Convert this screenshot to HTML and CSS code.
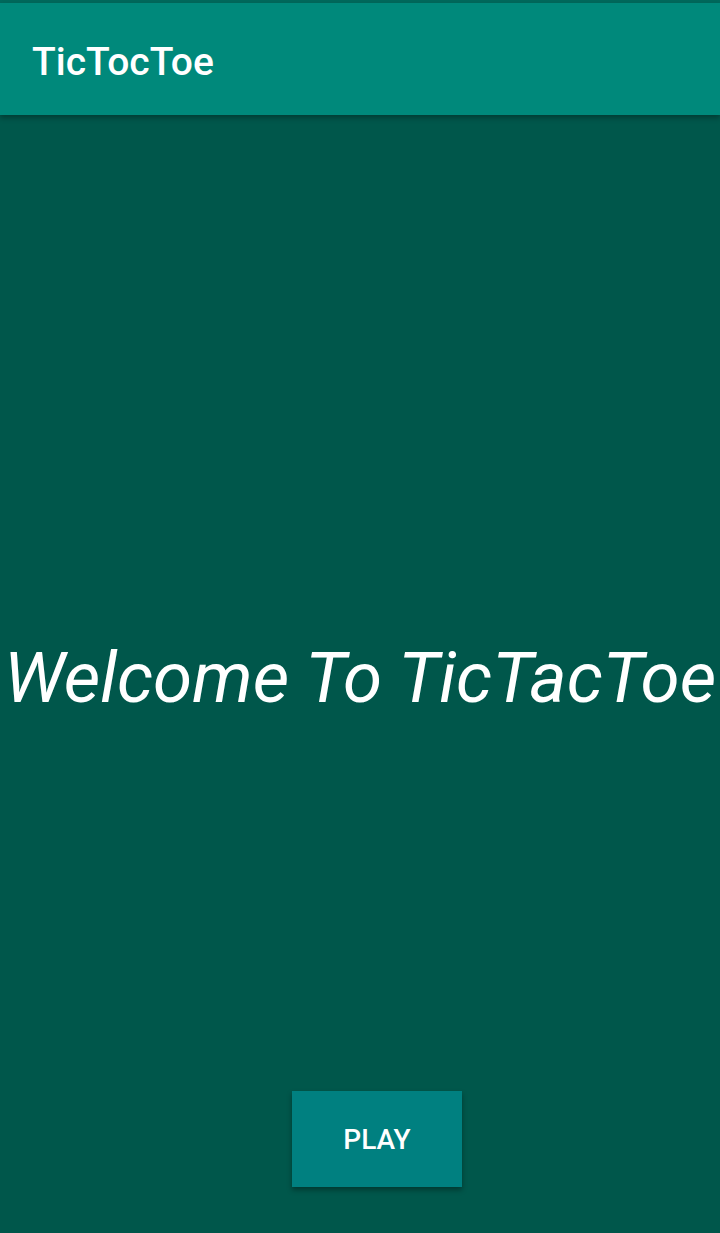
FILE: index.html
```html
<!DOCTYPE html>
<html>
<head>
<meta charset="utf-8">
<link rel="stylesheet" href="styles.css">
</head>
<body>
<div class="screen">
  <div class="statusbar"></div>
  <header class="appbar"><h1 class="title">TicTocToe</h1></header>
  <main class="content">
    <div class="spacer"></div>
    <p class="welcome">Welcome To TicTacToe</p>
    <div class="bottom"><button class="play">PLAY</button></div>
  </main>
</div>
</body>
</html>
```

FILE: styles.css
```css
html, body {
  margin: 0;
  padding: 0;
  height: 100%;
}
body {
  font-family: Roboto, "Noto Sans", sans-serif;
  background: #00574b;
}
.screen {
  display: flex;
  flex-direction: column;
  height: 1233px;
  width: 720px;
  overflow: hidden;
}
.statusbar {
  height: 3px;
  background: #00695c;
  flex: none;
}
.appbar {
  height: 112px;
  box-sizing: border-box;
  padding-top: 6px;
  flex: none;
  background: #00897b;
  display: flex;
  align-items: center;
  padding-left: 32px;
  box-shadow: 0 3px 5px rgba(0,0,0,0.3);
  position: relative;
  z-index: 1;
}
.title {
  margin: 0;
  color: #ffffff;
  font-size: 39px;
  font-weight: 500;
  line-height: 1;
}
.content {
  flex: 1;
  display: grid;
  grid-template-rows: 1fr auto 1fr;
  justify-items: center;
}
.welcome {
  margin: 6px 0 0;
  color: #ffffff;
  font-size: 71px;
  font-style: italic;
  font-weight: 400;
  white-space: nowrap;
}
.bottom {
  align-self: end;
  padding-bottom: 46px;
  padding-left: 34px;
}
.play {
  width: 170px;
  height: 96px;
  border: none;
  background: #008080;
  color: #ffffff;
  font-family: Roboto, sans-serif;
  font-size: 28px;
  font-weight: 500;
  box-shadow: 0 3px 5px rgba(0,0,0,0.35);
  padding: 0;
}
```
